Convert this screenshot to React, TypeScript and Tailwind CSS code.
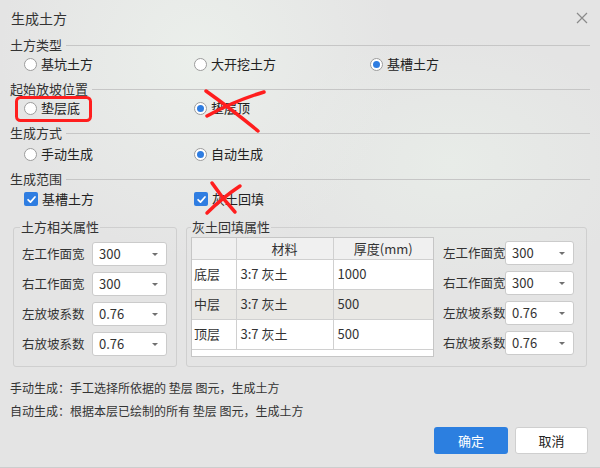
import React from "react";

const font = "font-['Noto_Sans_CJK_SC','Noto_Sans',sans-serif]";

function Radio({ checked = false }: { checked?: boolean }) {
  return (
    <span className="flex h-[13px] w-[13px] shrink-0 items-center justify-center rounded-full border border-[#9c9c9c] bg-white">
      {checked && <span className="h-[7px] w-[7px] rounded-full bg-[#2f7de1]" />}
    </span>
  );
}

function Check() {
  return (
    <span className="flex h-[14px] w-[14px] shrink-0 items-center justify-center rounded-[2px] bg-[#2f7de1]">
      <svg viewBox="0 0 12 12" className="h-[11px] w-[11px]">
        <path d="M2.3 6.3 L4.9 8.8 L9.8 3.3" stroke="white" strokeWidth="1.9" fill="none" strokeLinecap="round" strokeLinejoin="round" />
      </svg>
    </span>
  );
}

function SectionHeader({ title }: { title: string }) {
  return (
    <div className="flex h-[18px] items-center pr-[10px]">
      <span className="text-[13px] leading-[18px] text-[#333]">{title}</span>
      <span className="ml-[4px] h-px flex-1 bg-[#c6c6c6]" />
    </div>
  );
}

type Opt = { label: string; checked?: boolean; box?: boolean };

function OptionRow({ items }: { items: Opt[] }) {
  const widths = ["w-[170px]", "w-[176px]", "w-[180px]"];
  return (
    <div className="flex h-[20px] items-center pl-[24px]">
      {items.map((it, i) => (
        <div key={it.label} className={`flex items-center gap-[4px] ${widths[i]}`}>
          {it.box ? <Check /> : <Radio checked={it.checked} />}
          <span className="text-[13px] leading-[18px] text-[#222]">{it.label}</span>
        </div>
      ))}
    </div>
  );
}

function Select({ value, w }: { value: string; w: string }) {
  return (
    <div className={`flex h-[24px] items-center justify-between rounded-[3px] border border-[#cbcbcb] bg-white pl-[6px] pr-[8px] text-[13px] text-[#333] ${w}`}>
      <span>{value}</span>
      <span className="h-0 w-0 border-l-[3px] border-r-[3px] border-t-[3px] border-l-transparent border-r-transparent border-t-[#707070]" />
    </div>
  );
}

const props = [
  { label: "左工作面宽", value: "300" },
  { label: "右工作面宽", value: "300" },
  { label: "左放坡系数", value: "0.76" },
  { label: "右放坡系数", value: "0.76" },
];

function PropList({ labelW, selectW }: { labelW: string; selectW: string }) {
  return (
    <div className="flex flex-col gap-[6px]">
      {props.map((p) => (
        <div key={p.label} className="flex items-center">
          <span className={`whitespace-nowrap text-[12.5px] text-[#333] ${labelW}`}>{p.label}</span>
          <Select value={p.value} w={selectW} />
        </div>
      ))}
    </div>
  );
}

const layers = [
  { name: "底层", mat: "3:7 灰土", t: "1000", bg: "bg-white" },
  { name: "中层", mat: "3:7 灰土", t: "500", bg: "bg-[#e9e8e5]" },
  { name: "顶层", mat: "3:7 灰土", t: "500", bg: "bg-white" },
];

export default function App() {
  return (
    <div
      className={`relative h-[468px] w-[600px] overflow-hidden border-b border-[#cdcdcd] bg-[#e4e4e4] bg-[radial-gradient(ellipse_at_33%_12%,#ebefeb_0%,transparent_35%),radial-gradient(ellipse_at_75%_35%,#e8ece8_0%,transparent_30%)] ${font}`}
    >
      {/* title bar */}
      <div className="flex h-[36px] items-center justify-between pl-[11px] pr-[12px]">
        <span className="text-[14px] text-[#333]">生成土方</span>
        <svg viewBox="0 0 12 12" className="h-[12px] w-[12px]">
          <path d="M1 1 L11 11 M11 1 L1 11" stroke="#8a8a8a" strokeWidth="1.2" />
        </svg>
      </div>

      <div className="pl-[10px]">
        <SectionHeader title="土方类型" />
      </div>
      <OptionRow items={[{ label: "基坑土方" }, { label: "大开挖土方" }, { label: "基槽土方", checked: true }]} />

      <div className="mt-[6px] pl-[10px]">
        <SectionHeader title="起始放坡位置" />
      </div>
      <OptionRow items={[{ label: "垫层底" }, { label: "垫层顶", checked: true }]} />

      <div className="mt-[6px] pl-[10px]">
        <SectionHeader title="生成方式" />
      </div>
      <div className="mt-[2px]">
        <OptionRow items={[{ label: "手动生成" }, { label: "自动生成", checked: true }]} />
      </div>

      <div className="mt-[6px] pl-[10px]">
        <SectionHeader title="生成范围" />
      </div>
      <div className="mt-px">
        <OptionRow items={[{ label: "基槽土方", box: true }, { label: "灰土回填", box: true }]} />
      </div>

      {/* group boxes */}
      <div className="mt-[9px] flex gap-[9px] pl-[13px]">
        <fieldset className="h-[149px] w-[164px] rounded-[3px] border border-[#cfcfcf] pl-[8px] pt-[6px]">
          <legend className="-ml-[2px] px-[1px] text-[13px] leading-[18px] text-[#333]">土方相关属性</legend>
          <PropList labelW="w-[70px]" selectW="w-[75px]" />
        </fieldset>

        <fieldset className="flex h-[149px] w-[401px] gap-[9px] rounded-[3px] border border-[#cfcfcf] pl-[4px] pt-[1px]">
          <legend className="ml-0 px-[1px] text-[13px] leading-[18px] text-[#333]">灰土回填属性</legend>
          <div className="flex h-[120px] w-[243px] flex-col border border-[#c6c6c6] bg-white">
            <table className="w-full border-collapse text-[13px] text-[#333]">
              <thead>
                <tr className="h-[21px] bg-[#f0f0f0]">
                  <th className="w-[44px] border-b border-r border-[#d0d0d0] p-0" />
                  <th className="w-[97px] border-b border-r border-[#d0d0d0] p-0 font-normal">材料</th>
                  <th className="border-b border-[#d0d0d0] p-0 font-normal">厚度(mm)</th>
                </tr>
              </thead>
              <tbody>
                {layers.map((l) => (
                  <tr key={l.name} className={`h-[30px] ${l.bg}`}>
                    <td className="border-b border-r border-[#d0d0d0] pl-[2px]">{l.name}</td>
                    <td className="border-b border-r border-[#d0d0d0] pl-[4px]">{l.mat}</td>
                    <td className="border-b border-[#d0d0d0] pl-[4px]">{l.t}</td>
                  </tr>
                ))}
              </tbody>
            </table>
          </div>
          <div className="pt-[4px]">
            <PropList labelW="w-[62px]" selectW="w-[69px]" />
          </div>
        </fieldset>
      </div>

      {/* notes */}
      <div className="mt-[12px] flex flex-col gap-[5px] pl-[10px] text-[12px] leading-[18px] text-[#333]">
        <span>手动生成：手工选择所依据的 垫层 图元，生成土方</span>
        <span>自动生成：根据本层已绘制的所有 垫层 图元，生成土方</span>
      </div>

      <div className="mt-[7px] flex justify-end gap-[7px] pr-[12px]">
        <button className="h-[27px] w-[74px] rounded-[3px] bg-[#2c7fe0] text-[13px] text-white">确定</button>
        <button className="h-[27px] w-[73px] rounded-[3px] border border-[#cfcfcf] bg-white text-[13px] text-[#222]">取消</button>
      </div>

      {/* red annotations */}
      <svg className="pointer-events-none absolute inset-0" width="600" height="468" viewBox="0 0 600 468">
        <rect x="16.5" y="97.5" width="74" height="23" rx="4" fill="none" stroke="#ff1e1e" strokeWidth="3" />
        <path d="M206 91 Q230 108 258 131" fill="none" stroke="#ff1e1e" strokeWidth="3.5" strokeLinecap="round" />
        <path d="M264 92 Q234 101 207 116" fill="none" stroke="#ff1e1e" strokeWidth="3.5" strokeLinecap="round" />
        <path d="M212 183 Q222 198 235 212" fill="none" stroke="#ff1e1e" strokeWidth="3.5" strokeLinecap="round" />
        <path d="M240 186 Q222 198 207 213" fill="none" stroke="#ff1e1e" strokeWidth="3.5" strokeLinecap="round" />
      </svg>
    </div>
  );
}
